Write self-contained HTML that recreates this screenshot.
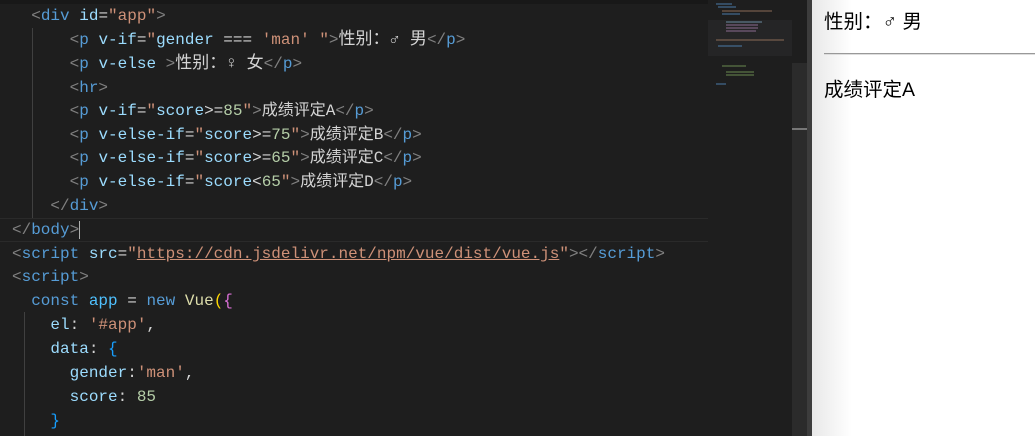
<!DOCTYPE html>
<html><head><meta charset="utf-8"><style>
body{margin:0;width:1035px;height:436px;overflow:hidden;background:#1e1e1e;position:relative;font-family:"Liberation Mono","Noto Sans CJK SC",monospace;}
.ed{position:absolute;left:0;top:0;width:792px;height:436px;background:#1e1e1e;}
.l{position:absolute;left:12px;height:24px;line-height:24px;font-size:16px;white-space:pre;color:#d4d4d4}
.cj{font-size:17px}
.t{color:#808080}.n{color:#569cd6}.a{color:#9cdcfe}.s{color:#ce9178}.w{color:#d4d4d4}.g{color:#b5cea8}.y{color:#dcdcaa}.c{color:#4fc1ff}.k{color:#569cd6}
.u{text-decoration:underline;text-decoration-color:#ce9178}
.cur{position:absolute;left:0;top:218px;width:708px;height:22px;border-top:1px solid #2a2a2a;border-bottom:1px solid #2a2a2a}
.guide{position:absolute;width:1px;background:#404040}
.right{position:absolute;left:812px;top:0;width:223px;height:436px;background:#fff;font-family:"Liberation Sans","Noto Sans CJK SC",sans-serif;color:#000;font-size:19.5px}
</style></head><body>
<div class="ed">
<div style="position:absolute;left:0;top:0;width:708px;height:4px;background:#181818"></div>
<div class="cur"></div>
<div class="guide" style="left:32px;top:28px;height:190px"></div>
<div class="guide" style="left:24px;top:312px;height:124px"></div>
<div class="l" style="top:4px">  <span class="t">&lt;</span><span class="n">div</span> <span class="a">id</span>=<span class="s">"app"</span><span class="t">&gt;</span></div>
<div class="l" style="top:28px">      <span class="t">&lt;</span><span class="n">p</span> <span class="a">v-if</span>=<span class="s">"</span><span class="a">gender</span> === <span class="s">'man'</span> <span class="s">"</span><span class="t">&gt;</span><span class="cj">性别：♂ 男</span><span class="t">&lt;/</span><span class="n">p</span><span class="t">&gt;</span></div>
<div class="l" style="top:52px">      <span class="t">&lt;</span><span class="n">p</span> <span class="a">v-else</span> <span class="t">&gt;</span><span class="cj">性别：♀ 女</span><span class="t">&lt;/</span><span class="n">p</span><span class="t">&gt;</span></div>
<div class="l" style="top:76px">      <span class="t">&lt;</span><span class="n">hr</span><span class="t">&gt;</span></div>
<div class="l" style="top:99px">      <span class="t">&lt;</span><span class="n">p</span> <span class="a">v-if</span>=<span class="s">"</span><span class="a">score</span>&gt;=<span class="g">85</span><span class="s">"</span><span class="t">&gt;</span>成绩评定A<span class="t">&lt;/</span><span class="n">p</span><span class="t">&gt;</span></div>
<div class="l" style="top:123px">      <span class="t">&lt;</span><span class="n">p</span> <span class="a">v-else-if</span>=<span class="s">"</span><span class="a">score</span>&gt;=<span class="g">75</span><span class="s">"</span><span class="t">&gt;</span>成绩评定B<span class="t">&lt;/</span><span class="n">p</span><span class="t">&gt;</span></div>
<div class="l" style="top:146px">      <span class="t">&lt;</span><span class="n">p</span> <span class="a">v-else-if</span>=<span class="s">"</span><span class="a">score</span>&gt;=<span class="g">65</span><span class="s">"</span><span class="t">&gt;</span>成绩评定C<span class="t">&lt;/</span><span class="n">p</span><span class="t">&gt;</span></div>
<div class="l" style="top:170px">      <span class="t">&lt;</span><span class="n">p</span> <span class="a">v-else-if</span>=<span class="s">"</span><span class="a">score</span>&lt;<span class="g">65</span><span class="s">"</span><span class="t">&gt;</span>成绩评定D<span class="t">&lt;/</span><span class="n">p</span><span class="t">&gt;</span></div>
<div class="l" style="top:194px">    <span class="t">&lt;/</span><span class="n">div</span><span class="t">&gt;</span></div>
<div class="l" style="top:218px"><span class="t">&lt;/</span><span class="n">body</span><span class="t">&gt;</span><span style="border-left:1px solid #aeafad"></span></div>
<div class="l" style="top:242px"><span class="t">&lt;</span><span class="n">script</span> <span class="a">src</span>=<span class="s">"<span class="u">https://cdn.jsdelivr.net/npm/vue/dist/vue.js</span>"</span><span class="t">&gt;&lt;/</span><span class="n">script</span><span class="t">&gt;</span></div>
<div class="l" style="top:265px"><span class="t">&lt;</span><span class="n">script</span><span class="t">&gt;</span></div>
<div class="l" style="top:289px">  <span class="k">const</span> <span class="c">app</span> = <span class="k">new</span> <span class="y">Vue</span><span style="color:#ffd700">(</span><span style="color:#da70d6">{</span></div>
<div class="l" style="top:313px">    <span class="a">el</span>: <span class="s">'#app'</span>,</div>
<div class="l" style="top:337px">    <span class="a">data</span>: <span style="color:#179fff">{</span></div>
<div class="l" style="top:361px">      <span class="a">gender</span>:<span class="s">'man'</span>,</div>
<div class="l" style="top:385px">      <span class="a">score</span>: <span class="g">85</span></div>
<div class="l" style="top:409px">    <span style="color:#179fff">}</span></div>
<div style="position:absolute;left:708px;top:20px;width:84px;height:36px;background:#252526"></div>
<svg style="position:absolute;left:712px;top:0" width="80" height="90">
<g stroke-width="1">
<line x1="4" y1="4" x2="20" y2="4" stroke="#4a7aa8"/><line x1="6" y1="7" x2="24" y2="7" stroke="#4a7aa8"/>
<line x1="10" y1="11" x2="60" y2="11" stroke="#8a6a55"/><line x1="10" y1="14" x2="28" y2="14" stroke="#4a7aa8"/>
<line x1="14" y1="22" x2="50" y2="22" stroke="#6a8aa0"/><line x1="14" y1="25" x2="46" y2="25" stroke="#8a6a90"/>
<line x1="14" y1="28" x2="46" y2="28" stroke="#8a6a90"/><line x1="14" y1="31" x2="44" y2="31" stroke="#8a6a90"/>
<line x1="4" y1="40" x2="72" y2="40" stroke="#8a6a55"/><line x1="6" y1="46" x2="30" y2="46" stroke="#4a7aa8"/>
<line x1="10" y1="66" x2="34" y2="66" stroke="#6a8a50"/><line x1="14" y1="72" x2="42" y2="72" stroke="#6a8a50"/>
<line x1="14" y1="75" x2="42" y2="75" stroke="#6a8a50"/><line x1="4" y1="84" x2="14" y2="84" stroke="#4a7aa8"/>
</g></svg>
</div>
<div style="position:absolute;left:792px;top:0;width:15px;height:436px;background:#2b2b2b"></div>
<div style="position:absolute;left:792px;top:0;width:15px;height:63px;background:#1e1e1e"></div>
<div style="position:absolute;left:792px;top:128px;width:15px;height:2px;background:#777"></div>
<div style="position:absolute;left:807px;top:0;width:5px;height:436px;background:#3c3c3c"></div>
<div class="right">
<div style="position:absolute;left:0;top:0;width:40px;height:436px;background:linear-gradient(to right,#e8e8e8,#fff)"></div>
<div style="position:absolute;left:12px;top:10px;line-height:24px">性别：♂ 男</div>
<div style="position:absolute;left:12px;top:53px;width:211px;height:1px;background:#999;border-bottom:1px solid #ddd"></div>
<div style="position:absolute;left:12px;top:78px;line-height:24px">成绩评定A</div>
</div>
</body></html>
